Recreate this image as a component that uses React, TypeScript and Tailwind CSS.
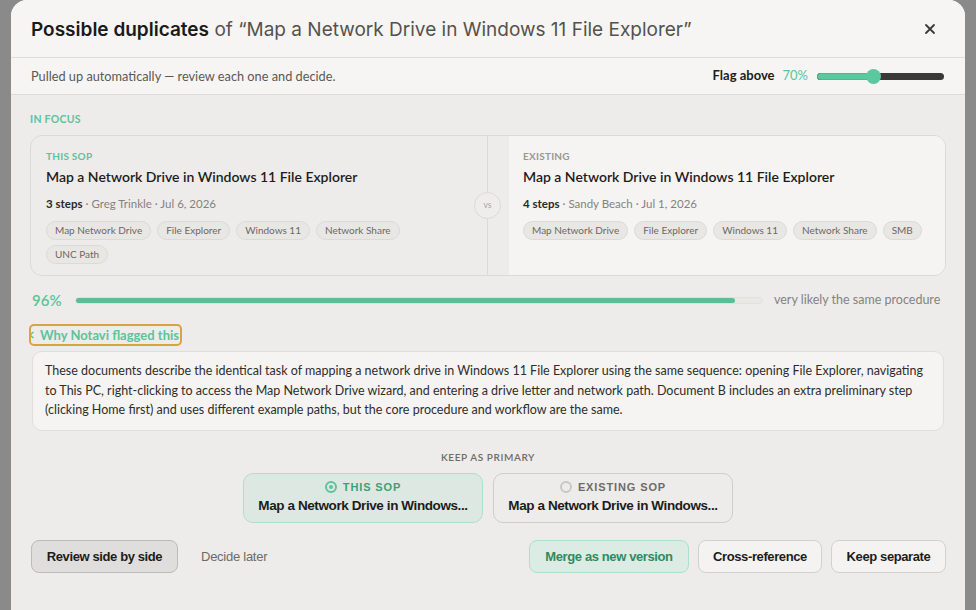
import React from 'react';

const thisTags = ['Map Network Drive', 'File Explorer', 'Windows 11', 'Network Share', 'UNC Path'];
const existingTags = ['Map Network Drive', 'File Explorer', 'Windows 11', 'Network Share', 'SMB'];

function Tag({ label }: { label: string }) {
  return (
    <span className="inline-flex h-[19px] items-center rounded-full border border-[#dcdad6] bg-[#e9e7e4] px-[8px] text-[10px] text-[#6b6864]">
      {label}
    </span>
  );
}

function SopPanel({
  kind,
  steps,
  author,
  date,
  tags,
  accent,
}: {
  kind: string;
  steps: string;
  author: string;
  date: string;
  tags: string[];
  accent: boolean;
}) {
  return (
    <div className="flex flex-col pt-[13px] pb-[12px]">
      <div className={`text-[10px] font-bold tracking-wide ${accent ? 'text-[#5cc39b]' : 'text-[#9a9793]'}`}>{kind}</div>
      <div className="mt-[2px] text-[14px] font-semibold text-[#1d1c1b]">Map a Network Drive in Windows 11 File Explorer</div>
      <div className="mt-[8px] text-[11.5px] text-[#85827d]">
        <span className="font-bold text-[#2a2927]">{steps}</span> · {author} · {date}
      </div>
      <div className="mt-[9px] flex flex-wrap gap-x-[6px] gap-y-[5px]">
        {tags.map(t => (
          <Tag key={t} label={t} />
        ))}
      </div>
    </div>
  );
}

export default function App() {
  return (
    <div className="h-[610px] overflow-hidden bg-[#8a8a8a] px-[11px]" style={{ fontFamily: 'Lato, "DejaVu Sans", sans-serif' }}>
      <div className="h-[640px] w-[954px] rounded-t-[16px] bg-[#edecea]">
        {/* Header */}
        <div className="flex h-[58px] items-center justify-between rounded-t-[16px] border-b border-[#e0deda] bg-[#f6f5f3] pl-[20px] pr-[29px]">
          <h2 className="mt-[3px] text-[19px] text-[#1b1a19]" style={{ fontFamily: 'Inter, sans-serif' }}>
            <span className="font-semibold">Possible duplicates</span>
            <span className="text-[#55524e]"> of “Map a Network Drive in Windows 11 File Explorer”</span>
          </h2>
          <svg width="12" height="12" viewBox="0 0 12 12" className="text-[#3a3937]">
            <path d="M2 2 L10 10 M10 2 L2 10" stroke="currentColor" strokeWidth="1.8" strokeLinecap="round" />
          </svg>
        </div>

        {/* Sub header */}
        <div className="flex h-[37px] items-center justify-between border-b border-[#dedcd8] bg-[#f6f5f3] pl-[20px] pr-[21px]">
          <span className="mt-[2px] text-[12.75px] text-[#5b5854]">Pulled up automatically — review each one and decide.</span>
          <div className="flex items-center">
            <span className="text-[13px] font-bold text-[#1d1c1b]">Flag above</span>
            <span className="ml-[8px] text-[13px] text-[#5cc39b]">70%</span>
            <div className="relative ml-[9px] h-[7px] w-[127px] rounded-full bg-[#3a3937]">
              <div className="h-full w-[57px] rounded-full border border-[#4fb88c] bg-[#5cc89f]" />
              <div className="absolute left-[49px] top-[-4px] h-[15px] w-[15px] rounded-full bg-[#5cc89f]" />
            </div>
          </div>
        </div>

        {/* Body */}
        <div className="px-[19px] pt-[17px]">
          <div className="text-[10.5px] font-bold tracking-wide text-[#5cc39b]">IN FOCUS</div>

          <div className="mt-[7px] flex h-[141px] overflow-hidden rounded-[12px] border border-[#dcdad6]">
            <div className="relative w-[457px] border-r border-[#dcdad6] pl-[15px] pr-[40px]">
              <SopPanel kind="THIS SOP" steps="3 steps" author="Greg Trinkle" date="Jul 6, 2026" tags={thisTags} accent />
              <div className="absolute right-[-14px] top-[56px] z-10 flex h-[27px] w-[27px] items-center justify-center rounded-full border border-[#dcdad6] bg-[#eeedeb] text-[8.5px] text-[#a8a5a0]">
                vs
              </div>
            </div>
            <div className="flex-1 pl-[21px]">
              <div className="h-full bg-[#f5f4f2] pl-[14px]">
                <SopPanel kind="EXISTING" steps="4 steps" author="Sandy Beach" date="Jul 1, 2026" tags={existingTags} accent={false} />
              </div>
            </div>
          </div>

          {/* Score */}
          <div className="mt-[13px] flex items-center">
            <span className="ml-[2px] w-[43px] text-[15px] font-semibold text-[#5cc39b]">96%</span>
            <div className="h-[7px] w-[688px] rounded-full border border-[#e2e0dc] bg-[#eae8e5]">
              <div className="h-full w-[96%] rounded-full bg-[#5cbd96]" />
            </div>
            <span className="ml-[11px] text-[12.5px] text-[#85827d]">very likely the same procedure</span>
          </div>

          {/* Why flagged */}
          <div className="mt-[15px] flex">
            <div className="ml-[1px] inline-flex h-[18px] items-center rounded-[3px] pr-[1px] outline-2 outline-[#dba23d]">
              <svg width="10" height="10" viewBox="0 0 10 10" className="ml-[-4px] text-[#5cc39b]">
                <path d="M6.5 2 L3 5 L6.5 8" fill="none" stroke="currentColor" strokeWidth="1.4" />
              </svg>
              <span className="ml-[3px] text-[13px] font-bold text-[#5cc39b]">Why Notavi flagged this</span>
            </div>
          </div>

          <div className="mx-[2px] mt-[7px] rounded-[10px] border border-[#e0deda] bg-[#f5f4f2] px-[12px] pt-[9px] pb-[10px] text-[12.5px] leading-[19.5px] text-[#2e2d2b]">
            These documents describe the identical task of mapping a network drive in Windows 11 File Explorer using the same sequence: opening File Explorer, navigating
            <br />
            to This PC, right-clicking to access the Map Network Drive wizard, and entering a drive letter and network path. Document B includes an extra preliminary step
            <br />
            (clicking Home first) and uses different example paths, but the core procedure and workflow are the same.
          </div>

          {/* Keep as primary */}
          <div className="mt-[19px] text-center text-[10px] font-semibold tracking-[0.06em] text-[#6e6b67]">KEEP AS PRIMARY</div>
          <div className="mt-[8px] flex justify-center gap-[10px]" style={{ fontFamily: '"Liberation Sans", Arial, sans-serif' }}>
            <div className="flex h-[50px] w-[240px] flex-col items-center justify-center rounded-[10px] border border-[#ade0c8] bg-[#dee8e2] px-[13px]">
              <div className="flex items-center gap-[6px]">
                <span className="flex h-[12px] w-[12px] items-center justify-center rounded-full border-2 border-[#5cc39b]">
                  <span className="h-[4px] w-[4px] rounded-full bg-[#5cc39b]" />
                </span>
                <span className="text-[11px] font-bold tracking-[0.08em] text-[#3f9f74]">THIS SOP</span>
              </div>
              <div className="mt-[1px] w-full text-center text-[13.5px] font-bold tracking-[-0.03em] text-[#1d1c1b]">
                Map a Network Drive in Windows...
              </div>
            </div>
            <div className="flex h-[50px] w-[240px] flex-col items-center justify-center rounded-[10px] border border-[#cfcdc9] px-[13px]">
              <div className="flex items-center gap-[6px]">
                <span className="h-[12px] w-[12px] rounded-full border-2 border-[#c9c7c3]" />
                <span className="text-[11px] font-bold tracking-[0.08em] text-[#6e6b67]">EXISTING SOP</span>
              </div>
              <div className="mt-[1px] w-full text-center text-[13.5px] font-bold tracking-[-0.03em] text-[#1d1c1b]">
                Map a Network Drive in Windows...
              </div>
            </div>
          </div>

          {/* Actions */}
          <div className="mt-[17px] flex items-center justify-between text-[13px]" style={{ fontFamily: '"Liberation Sans", Arial, sans-serif' }}>
            <div className="flex items-center">
              <button className="ml-[1px] h-[33px] w-[147px] rounded-[8px] border border-[#bdbbb7] bg-[#dfdedc] font-bold tracking-[-0.03em] text-[#1d1c1b]">
                Review side by side
              </button>
              <button className="ml-[23px] tracking-[-0.02em] text-[#6e6b67]">Decide later</button>
            </div>
            <div className="flex items-center gap-[9px]">
              <button className="h-[33px] w-[160px] rounded-[8px] border border-[#ade0c8] bg-[#dcebe3] font-bold tracking-[-0.03em] text-[#2f8a5e]">
                Merge as new version
              </button>
              <button className="h-[33px] w-[124px] rounded-[8px] border border-[#d3d1cd] bg-[#f4f3f1] font-bold tracking-[-0.03em] text-[#1d1c1b]">
                Cross-reference
              </button>
              <button className="h-[33px] w-[115px] rounded-[8px] border border-[#d3d1cd] bg-[#f4f3f1] font-bold tracking-[-0.03em] text-[#1d1c1b]">
                Keep separate
              </button>
            </div>
          </div>
        </div>
      </div>
    </div>
  );
}
